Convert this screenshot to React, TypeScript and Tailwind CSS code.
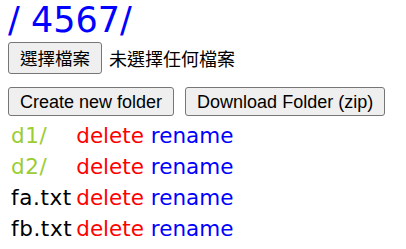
import React from "react";

const btn =
  "bg-[#efefef] border border-[#767676] rounded-[3px] text-black leading-none";

export default function App() {
  const rows = [
    { name: "d1/", dir: true },
    { name: "d2/", dir: true },
    { name: "fa.txt", dir: false },
    { name: "fb.txt", dir: false },
  ];
  return (
    <div className="px-2 bg-white w-[406px] h-[249px] overflow-hidden" style={{ fontFamily: '"DejaVu Sans", "Noto Sans CJK TC", sans-serif' }}>
      <h1 className="text-[35px] leading-[40px] text-[#0000ff] m-0 font-normal">/ 4567/</h1>
      <div className="flex items-center mt-[2px] h-[32px]">
        <button className={`${btn} h-[32px] px-[11px] text-[17.5px]`} style={{ fontFamily: '"Noto Sans CJK TC", sans-serif' }}>選擇檔案</button>
        <span className="ml-[7px] text-[18px] text-black" style={{ fontFamily: '"Noto Sans CJK TC", sans-serif' }}>未選擇任何檔案</span>
      </div>
      <div className="flex gap-[11px] mt-[13px]">
        <button className={`${btn} h-[29px] px-[11px] text-[18px]`} style={{ fontFamily: '"Liberation Sans", Arial, sans-serif' }}>Create new folder</button>
        <button className={`${btn} h-[29px] px-[11px] text-[18px]`} style={{ fontFamily: '"Liberation Sans", Arial, sans-serif' }}>Download Folder (zip)</button>
      </div>
      <table className="mt-[3px] border-separate border-spacing-[2px] text-[21.5px] leading-[29px]">
        <tbody>
          {rows.map((r) => (
            <tr key={r.name}>
              <td className={`px-[1px] py-0 h-[29px] w-[63px] tracking-[0.6px] ${r.dir ? "text-[#9acd32]" : "text-black"}`}>{r.name}</td>
              <td className="px-[1px] py-0">
                <span className="text-[#ff0000]">delete</span>{" "}
                <span className="text-[#0000ff]">rename</span>
              </td>
            </tr>
          ))}
        </tbody>
      </table>
    </div>
  );
}
